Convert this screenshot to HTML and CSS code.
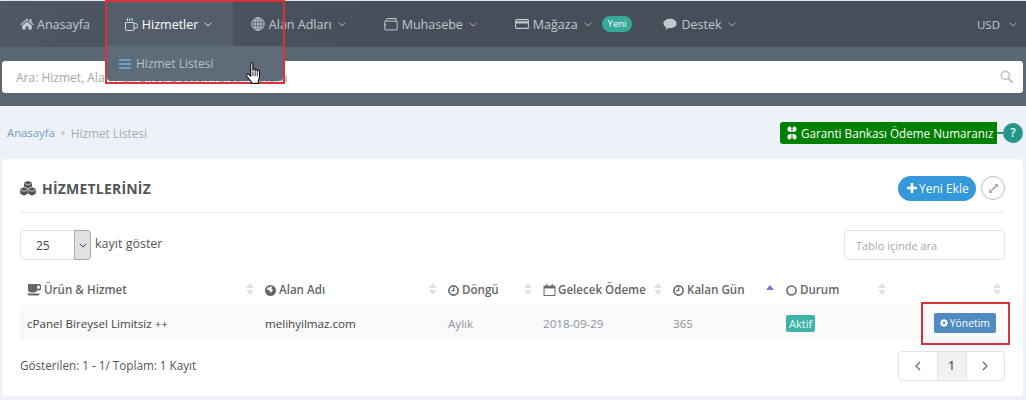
FILE: index.html
```html
<!DOCTYPE html>
<html lang="en">
<head>
  <meta charset="UTF-8" />
  <title>Hizmet Listesi</title>
  <link rel="stylesheet" href="styles.css">
</head>
<body>
  <nav class="topnav">
    <a class="nav-item nav-home">
      <svg class="nav-icon" viewBox="0 0 14 12"><path d="M7 0.6 0.2 6.4l.7.8L7 2.200l6.100 5 .7-.8-2.300-2V1h-1.800v2.800zM2.200 7.400V11.600h3.400V8.400h2.800v3.200h3.400V7.400L7 3.400z"/></svg>
      Anasayfa
    </a>
    <a class="nav-item nav-active">
      <svg class="nav-icon" viewBox="0 0 14 14" fill="none" stroke="currentColor" stroke-width="1"><path d="M1.500 5.500h8.500v6.500a1.500 1.500 0 0 1-1.500 1.500H3A1.500 1.500 0 0 1 1.500 12zM10 6.500h1.500a2 2 0 0 1 0 4.500H10M3.500 1v3M5.700 1v3M8 1v3"/></svg>
      Hizmetler
      <svg class="chevron" viewBox="0 0 8 5"><path d="M.7.7 4 4 7.300.7"/></svg>
    </a>
    <a class="nav-item">
      <svg class="nav-icon" viewBox="0 0 14 14" fill="none" stroke="currentColor" stroke-width="1"><circle cx="7" cy="7" r="6.200"/><ellipse cx="7" cy="7" rx="3" ry="6.200"/><path d="M7 .8v12.400M.8 7h12.400M1.800 3.800h10.400M1.800 10.200h10.400"/></svg>
      Alan Adları
      <svg class="chevron" viewBox="0 0 8 5"><path d="M.7.7 4 4 7.300.7"/></svg>
    </a>
    <a class="nav-item">
      <svg class="nav-icon" viewBox="0 0 14 13" fill="none" stroke="currentColor" stroke-width="1"><path d="M.8 4.500v7a.9.9 0 0 0 .9.9h10.600a.9.9 0 0 0 .9-.9v-7a.9.9 0 0 0-.9-.9H1.700a.9.9 0 0 0-.9.9zM1.500 3.600 3 1h9v2.600M.8 7.500h1.600"/></svg>
      Muhasebe
      <svg class="chevron" viewBox="0 0 8 5"><path d="M.7.7 4 4 7.300.7"/></svg>
    </a>
    <a class="nav-item">
      <svg class="nav-icon" viewBox="0 0 14 12" fill="none" stroke="currentColor"><rect x=".6" y="1.600" width="12.800" height="8.800" rx="1" stroke-width="1.100"/><path d="M.6 4.400h12.800" stroke-width="2.200"/></svg>
      Mağaza
      <svg class="chevron" viewBox="0 0 8 5"><path d="M.7.7 4 4 7.300.7"/></svg>
      <span class="nav-badge">Yeni</span>
    </a>
    <a class="nav-item nav-destek">
      <svg class="nav-icon" viewBox="0 0 14 12"><path d="M7 .8c3.600 0 6.600 2.100 6.600 4.700S10.600 10.200 7 10.200c-.6 0-1.100 0-1.600-.1-.9.8-2.100 1.300-3.400 1.400.7-.7 1.200-1.500 1.300-2.300C1.500 8.300.4 7 .4 5.500.4 2.900 3.400.8 7 .8z"/></svg>
      Destek
      <svg class="chevron" viewBox="0 0 8 5"><path d="M.7.7 4 4 7.300.7"/></svg>
    </a>
    <a class="nav-item nav-currency">
      USD
      <svg class="chevron" viewBox="0 0 8 5"><path d="M.7.7 4 4 7.300.7"/></svg>
    </a>
  </nav>

  <div class="search-band">
    <div class="search-box">
      <input type="text" placeholder="Ara: Hizmet, Alan Adı, Bilet, Destek Talebi, Fatura">
      <svg class="search-icon" viewBox="0 0 14 14" fill="none" stroke="currentColor"><circle cx="5.800" cy="5.800" r="4.400" stroke-width="1.800"/><path d="m9 9 4 4" stroke-width="2.200" stroke-linecap="round"/></svg>
    </div>
  </div>

  <div class="crumb-row">
    <div class="crumbs">
      <a>Anasayfa</a>
      <span class="crumb-dot"></span>
      <span class="crumb-current">Hizmet Listesi</span>
    </div>
    <div class="bank-note">
      <a class="bank-btn">
        <svg class="bank-icon" viewBox="0 0 12 12" preserveAspectRatio="none"><path d="M1 1.200C2.500 0 4.800.3 5.300 2c.2 1 .2 2 .2 3.200C3.800 5.300 2.500 5 1.500 4.500.4 3.800.3 2 1 1.200zM11 1.200c-1.500-1.200-3.800-.9-4.300.8-.2 1-.2 2-.2 3.200 1.700.1 3-.2 4-.7 1.100-.7 1.200-2.500.5-3.300zM1 10.800c1.500 1.200 3.800.9 4.300-.8.2-1 .2-2 .2-3.200-1.700-.1-3 .2-4 .7-1.100.7-1.200 2.500-.5 3.300zM11 10.800c-1.500 1.200-3.800.9-4.300-.8-.2-1-.2-2-.2-3.200 1.700-.1 3 .2 4 .7 1.100.7 1.200 2.500.5 3.300z"/></svg>
        Garanti Bankası Ödeme Numaranız
      </a>
      <span class="bank-line"></span>
      <span class="bank-help">?</span>
    </div>
  </div>

  <section class="card">
    <header class="card-head">
      <h2>
        <svg class="cubes" viewBox="0 0 16 15"><path d="M8 0 12 1.600v4L8 7.400 4 5.600v-4zM4 6.300 7.800 8v4.800L4 14.800.2 12.800V8zM12 6.300 15.800 8v4.800L12 14.800 8.200 12.800V8z"/><path d="M4.300 2.400 8 4l3.700-1.600M.5 8.900 4 10.400 7.500 8.900M8.500 8.900 12 10.400l3.500-1.500" fill="none" stroke="#fff" stroke-width=".6"/></svg>
        HİZMETLERİNİZ
      </h2>
      <div class="head-actions">
        <a class="add-btn">
          <svg viewBox="0 0 10 10"><path d="M3.700 0h2.600v3.700H10v2.600H6.300V10H3.700V6.300H0V3.700h3.700z"/></svg>
          Yeni Ekle
        </a>
        <a class="expand-btn">
          <svg viewBox="0 0 12 12"><path d="M6.800 1H11v4.200L9.500 3.700 3.700 9.500 5.200 11H1V6.800l1.500 1.500 5.800-5.800z"/></svg>
        </a>
      </div>
    </header>

    <div class="table-tools">
      <div class="length">
        <div class="select">
          <span class="select-value">25</span>
          <span class="select-arrow"><svg viewBox="0 0 8 5"><path d="M.7.7 4 4 7.300.7"/></svg></span>
        </div>
        kayıt göster
      </div>
      <input class="table-search" type="text" placeholder="Tablo içinde ara">
    </div>

    <table class="services">
      <thead>
        <tr>
          <th class="col-product"><svg class="th-icon" viewBox="0 0 14 12"><path d="M1 0h10.500a2.500 2.500 0 0 1 0 6.400H10a2.500 2.500 0 0 1-2.500 2H3.500A2.500 2.500 0 0 1 1 6zM10.200 1.600v3.200h1.200a1.600 1.600 0 0 0 0-3.200zM0 9.600h13l-1 1.400a1 1 0 0 1-.8.4H1.800a1 1 0 0 1-.8-.4z"/></svg>Ürün &amp; Hizmet<span class="sort"></span></th>
          <th class="col-domain"><svg class="th-icon icon-round" viewBox="0 0 12 12"><path d="M6 0a6 6 0 1 1 0 12A6 6 0 0 1 6 0zM3 2.500 2 4.500l1.500 1 1.500.2.500 1.500 1 1.500.8-2 1.700-1.200-1.500-1-.5-1.500 1.200-.7L6.500 1.300 5 2.600z" fill-rule="evenodd"/></svg>Alan Adı<span class="sort"></span></th>
          <th class="col-cycle"><svg class="th-icon icon-round" viewBox="0 0 12 12" fill="none" stroke="currentColor" stroke-width="1.800"><circle cx="6" cy="6" r="5"/><path d="M6.200 2.800v3.400H3.600" stroke-width="1.400"/></svg>Döngü<span class="sort"></span></th>
          <th class="col-date"><svg class="th-icon icon-cal" viewBox="0 0 13 13" fill="none" stroke="currentColor"><rect x=".6" y="2.400" width="11.800" height="10" stroke-width="1.100"/><path d="M.6 3.600h11.800" stroke-width="2.400"/><path d="M3.500.2v2.600M9.500.2v2.600" stroke-width="1.600"/></svg>Gelecek Ödeme<span class="sort"></span></th>
          <th class="col-days"><svg class="th-icon icon-round" viewBox="0 0 12 12" fill="none" stroke="currentColor" stroke-width="1.800"><circle cx="6" cy="6" r="5"/><path d="M6.200 2.800v3.400H3.600" stroke-width="1.400"/></svg>Kalan Gün<span class="sort sort-asc"></span></th>
          <th class="col-status"><svg class="th-icon icon-status" viewBox="0 0 12 12" fill="none" stroke="currentColor" stroke-width="1.700"><circle cx="6" cy="6" r="5"/></svg>Durum<span class="sort"></span></th>
          <th class="col-action"><span class="sort"></span></th>
        </tr>
      </thead>
      <tbody>
        <tr>
          <td class="cell-strong">cPanel Bireysel Limitsiz ++</td>
          <td class="cell-strong">melihyilmaz.com</td>
          <td>Aylık</td>
          <td>2018-09-29</td>
          <td>365</td>
          <td><span class="status">Aktif</span></td>
          <td class="cell-action">
            <a class="manage-btn">
              <svg viewBox="0 0 12 12"><path fill-rule="evenodd" d="M5 0h2l.3 1.600 1 .4L9.700 1.100l1.300 1.300-.9 1.400.4 1L12 5v2l-1.500.3-.4 1 .9 1.400-1.300 1.300-1.400-.9-1 .4L7 12H5l-.3-1.500-1-.4-1.400.9L1 9.700l.9-1.400-.4-1L0 7V5l1.500-.3.4-1L1 2.400l1.300-1.300 1.400.9 1-.4zM6 4a2 2 0 1 0 0 4 2 2 0 0 0 0-4z"/></svg>
              Yönetim
            </a>
          </td>
        </tr>
      </tbody>
    </table>

    <footer class="table-foot">
      <span>Gösterilen: 1 - 1/ Toplam: 1 Kayıt</span>
      <div class="pager">
        <a class="page-arrow"><svg viewBox="0 0 6 10"><path d="M5 1 1 5l4 4"/></svg></a>
        <a class="page-current">1</a>
        <a class="page-arrow"><svg viewBox="0 0 6 10"><path d="M1 1l4 4-4 4"/></svg></a>
      </div>
    </footer>
  </section>

  <!-- dropdown and annotations lie over the page -->
  <div class="dropdown">
    <svg viewBox="0 0 12 10"><path d="M0 0h12v2H0zM0 4h12v2H0zM0 8h12v2H0z"/></svg>
    Hizmet Listesi
  </div>
  <div class="mark mark-menu"></div>
  <div class="mark mark-manage"></div>
  <svg class="hand" viewBox="0 0 16 21"><path d="M5 1.500c0-1.300 2-1.300 2 0V8V6.800c0-1.200 2-1.200 2 0V8.500 7.500c0-1.200 2-1.200 2 0V9 8.400c0-1.200 2-1.200 2 0v5.100c0 1.500-.5 2.500-1 3.500v2.500H5.500V18c-1-1.200-2.500-3-4-5-.9-1.300.6-2.800 1.800-1.700L5 13z" fill="#fff" stroke="#111" stroke-width="1" stroke-linejoin="round"/><path d="M7 9v4M9 9v4M11 9.500V13" stroke="#111" stroke-width=".8" fill="none"/></svg>
</body>
</html>
```

FILE: styles.css
```css
* {
  box-sizing: border-box;
}

html, body {
  height: 400px;
  overflow: hidden;
}

body {
  margin: 0;
  position: relative;
  font-family: "Open Sans", sans-serif;
  font-size: 12px;
  color: #555;
  background-color: #eef1f7;
}

svg {
  display: block;
  flex: none;
}

:where(svg:not([fill])) {
  fill: currentColor;
}

input {
  font-family: inherit;
  outline: none;
}

/* top nav */
.topnav {
  display: flex;
  height: 47px;
  border-top: 1px solid #e4e6e9;
  background: linear-gradient(90deg, #4e5864, #454e59 40%);
  color: #c3c8cd;
  font-size: 12.500px;
}

.nav-item {
  display: flex;
  align-items: center;
  padding: 0 20px 0 18px;
}

.nav-home {
  padding: 0 17px 0 20px;
}

.nav-active {
  width: 126px;
  padding-left: 17px;
  background-color: #535e6a;
  color: #fff;
}

.nav-destek {
  padding-left: 11px;
}

.nav-currency {
  margin-left: auto;
  padding: 0 9px 0 0;
  font-size: 11.500px;
}

.nav-icon {
  width: 14px;
  height: 14px;
  margin-right: 4px;
}

.nav-home .nav-icon {
  margin-right: 3px;
}

.nav-active .nav-icon {
  color: #d5d9dd;
}

.chevron {
  width: 8px;
  height: 5px;
  margin-left: 6px;
  fill: none;
  stroke: currentColor;
  stroke-width: 1;
  opacity: 0.8;
}

.nav-currency .chevron {
  margin-left: 9px;
}

.nav-badge {
  margin-left: 10px;
  padding: 0 6px;
  height: 16px;
  line-height: 16px;
  border-radius: 8px;
  background-color: #36a99b;
  color: #fff;
  font-size: 9.500px;
}

/* search */
.search-band {
  height: 59px;
  padding: 14px 3px 13px 2px;
  background-color: #5b6673;
}

.search-box {
  position: relative;
  height: 32px;
  border-radius: 4px;
  background-color: #fff;
}

.search-box input {
  width: 100%;
  height: 32px;
  padding: 0 40px 0 14px;
  border: none;
  border-radius: 4px;
  font-size: 12px;
}

.search-box input::placeholder {
  color: #a6a6a6;
}

.search-icon {
  position: absolute;
  top: 9px;
  right: 10px;
  width: 13px;
  height: 13px;
  color: #c4c4c4;
}

/* breadcrumb */
.crumb-row {
  display: flex;
  justify-content: space-between;
  align-items: center;
  height: 53px;
  padding: 0 3px 0 7px;
}

.crumbs {
  display: flex;
  align-items: center;
  font-size: 11.300px;
}

.crumbs a {
  color: #6c9ec4;
}

.crumb-dot {
  width: 4px;
  height: 4px;
  margin: 0 6px;
  border-radius: 50%;
  background-color: #c5ccd3;
}

.crumb-current {
  color: #a5abb1;
  font-size: 11.800px;
}

.bank-note {
  display: flex;
  align-items: center;
}

.bank-btn {
  display: flex;
  align-items: center;
  width: 217px;
  height: 22px;
  padding-left: 7px;
  border-radius: 3px 0 0 3px;
  background-color: #008000;
  color: #fff;
  font-size: 11.700px;
  white-space: nowrap;
}

.bank-icon {
  width: 10px;
  height: 14px;
  margin-right: 4px;
}

.bank-line {
  width: 6px;
  height: 2px;
  background-color: #26958a;
}

.bank-help {
  width: 20px;
  height: 20px;
  border-radius: 50%;
  background-color: #26958a;
  color: #dff;
  text-align: center;
  line-height: 20px;
  font-weight: 600;
}

/* card */
.card {
  height: 237px;
  margin: 0 3px 0 2px;
  padding: 0 18px;
  border-radius: 4px;
  background-color: #fff;
}

.card-head {
  display: flex;
  justify-content: space-between;
  align-items: center;
  height: 54px;
  padding-top: 5px;
  border-bottom: 1px solid #eaeaea;
}

.card-head h2 {
  display: flex;
  align-items: center;
  margin: 0;
  font-size: 14px;
  font-weight: 700;
  letter-spacing: 0.2px;
  color: #555;
}

.cubes {
  width: 16px;
  height: 15px;
  margin-right: 6px;
}

.head-actions {
  display: flex;
  align-items: center;
  gap: 5px;
}

.add-btn {
  display: flex;
  align-items: center;
  width: 78px;
  height: 25px;
  padding-left: 9px;
  border-radius: 13px;
  background-color: #3498db;
  color: #fff;
  font-size: 12px;
}

.add-btn svg {
  width: 10px;
  height: 10px;
  margin-right: 2px;
}

.expand-btn {
  display: flex;
  align-items: center;
  justify-content: center;
  width: 24px;
  height: 24px;
  border: 1px solid #bbb;
  border-radius: 50%;
  color: #aaa;
}

.expand-btn svg {
  width: 11px;
  height: 11px;
}

.table-tools {
  display: flex;
  justify-content: space-between;
  margin-top: 17px;
  height: 45px;
}

.length {
  display: flex;
  align-items: flex-start;
  gap: 4px;
  line-height: 27px;
  font-size: 12.500px;
}

.select {
  display: flex;
  width: 71px;
  height: 30px;
  border: 1px solid #e4e4e4;
  border-radius: 4px;
}

.select-value {
  flex: 1;
  padding-left: 15px;
  line-height: 30px;
  font-size: 12px;
  color: #444;
}

.select-arrow {
  display: flex;
  align-items: center;
  justify-content: center;
  width: 17px;
  margin: -1px;
  border: 1px solid #a9a9a9;
  border-radius: 0 4px 4px 0;
  background-color: #e1e1e1;
}

.select-arrow svg {
  width: 8px;
  height: 5px;
  fill: none;
  stroke: #444;
}

.table-search {
  width: 161px;
  height: 30px;
  padding: 0 11px;
  border: 1px solid #e4e4e4;
  border-radius: 4px;
  font-size: 11px;
}

.table-search::placeholder {
  color: #a9a9a9;
}

/* table */
.services {
  width: 985px;
  table-layout: fixed;
  border-collapse: collapse;
}

.services th {
  position: relative;
  height: 30px;
  padding: 0 0 2px 7px;
  text-align: left;
  font-size: 11.600px;
  font-weight: 600;
  color: #666;
  white-space: nowrap;
}

.col-product { width: 238px; }
.col-domain { width: 183px; }
.col-cycle { width: 95px; }
.col-date { width: 130px; }
.col-days { width: 113px; }
.col-status { width: 111px; }

.th-icon {
  display: inline-block;
  width: 13px;
  height: 12px;
  margin-right: 3px;
  vertical-align: -2px;
}

.col-product .th-icon {
  width: 14px;
  margin-right: 3px;
}

.icon-round {
  width: 11px;
  height: 11px;
}

.icon-cal {
  margin-right: 2px;
}

.icon-status {
  width: 11px;
  height: 11px;
}

/* two small triangles drawn from one element */
.sort {
  position: absolute;
  top: 8px;
  right: 4px;
  width: 0;
  height: 0;
  border: 4px solid transparent;
  border-top: none;
  border-bottom: 5px solid #e0e0e0;
}

.sort::after {
  content: "";
  position: absolute;
  top: 7px;
  left: -4px;
  border: 4px solid transparent;
  border-bottom: none;
  border-top: 5px solid #e0e0e0;
}

.sort-asc {
  top: 10px;
  right: 5px;
  border-bottom-color: #7b74d6;
}

.sort-asc::after {
  display: none;
}

.services td {
  height: 36px;
  padding: 0 0 0 7px;
  background-color: #f9f9f9;
  color: #8b939c;
  font-size: 11.600px;
}

.services td.cell-strong {
  color: #444;
}

.status {
  display: inline-block;
  padding: 0 3px;
  height: 17px;
  line-height: 17px;
  border-radius: 2px;
  background-color: #3fb3a5;
  color: #e9fbf8;
  font-size: 11px;
}

.services td.cell-action {
  padding: 0 9px 0 0;
  text-align: right;
}

.manage-btn {
  display: inline-flex;
  align-items: center;
  height: 20px;
  padding: 0 6px;
  border-radius: 2px;
  background-color: #4f8bc0;
  color: #fff;
  font-size: 10.400px;
}

.manage-btn svg {
  width: 8px;
  height: 8px;
  margin-right: 2px;
}

.table-foot {
  display: flex;
  justify-content: space-between;
  margin-top: 10px;
  width: 985px;
}

.table-foot span {
  line-height: 28px;
  font-size: 11.700px;
}

.pager {
  display: flex;
  width: 107px;
  height: 30px;
  border: 1px solid #e3e3e3;
  border-radius: 4px;
}

.page-arrow {
  display: flex;
  align-items: center;
  justify-content: center;
  flex: 1;
}

.page-arrow svg {
  width: 6px;
  height: 10px;
  fill: none;
  stroke: #666;
  stroke-width: 1.200;
}

.page-current {
  width: 30px;
  border-left: 1px solid #e3e3e3;
  border-right: 1px solid #e3e3e3;
  background-color: #f1f1f1;
  text-align: center;
  line-height: 28px;
  font-weight: 600;
  font-size: 12px;
  color: #666;
}

/* overlays */
.dropdown {
  position: absolute;
  top: 46px;
  left: 107px;
  display: flex;
  align-items: center;
  gap: 5px;
  width: 176px;
  height: 35px;
  padding: 0 12px;
  border-radius: 0 0 4px 4px;
  background-color: #5f6b78;
  color: #b9c0c7;
  font-size: 12px;
}

.dropdown svg {
  width: 12px;
  height: 10px;
  color: #6a9fce;
}

.mark {
  position: absolute;
  border: 2px solid #da3239;
}

.mark-menu {
  left: 105px;
  top: 0;
  width: 180px;
  height: 84px;
}

.mark-manage {
  left: 921px;
  top: 302px;
  width: 89px;
  height: 43px;
}

.hand {
  position: absolute;
  left: 245px;
  top: 62px;
  width: 18px;
  height: 23px;
}
```
